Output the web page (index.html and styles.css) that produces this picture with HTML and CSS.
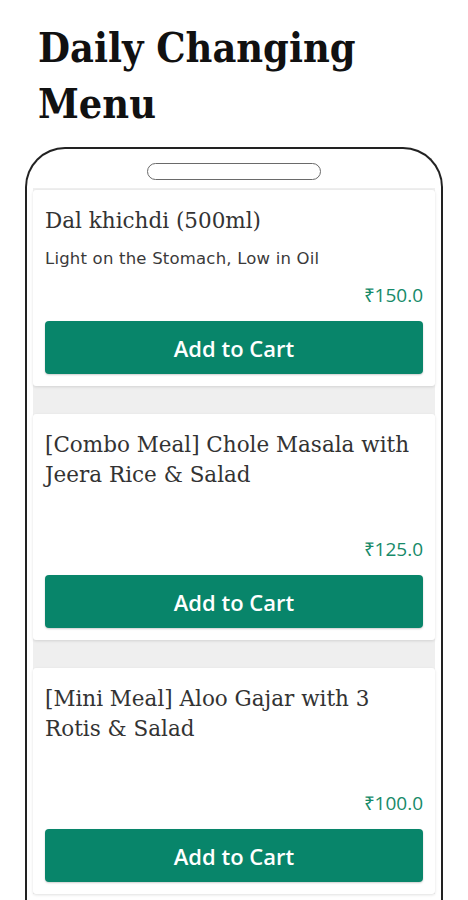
FILE: index.html
```html
<!DOCTYPE html>
<html lang="en">
<head>
<meta charset="utf-8">
<title>Daily Changing Menu</title>
<link rel="stylesheet" href="styles.css">
</head>
<body>
  <h1 class="heading">Daily Changing<br>Menu</h1>
  <div class="phone">
    <div class="notch"></div>
    <div class="list">
      <div class="card">
        <div class="title">Dal khichdi (500ml)</div>
        <div class="desc">Light on the Stomach, Low in Oil</div>
        <div class="price">₹150.0</div>
        <button class="cart">Add to Cart</button>
      </div>
      <div class="card">
        <div class="title">[Combo Meal] Chole Masala with Jeera Rice &amp; Salad</div>
        <div class="desc"></div>
        <div class="price">₹125.0</div>
        <button class="cart">Add to Cart</button>
      </div>
      <div class="card">
        <div class="title">[Mini Meal] Aloo Gajar with 3 Rotis &amp; Salad</div>
        <div class="desc"></div>
        <div class="price">₹100.0</div>
        <button class="cart">Add to Cart</button>
      </div>
    </div>
  </div>
</body>
</html>
```

FILE: styles.css
```css
* { box-sizing: border-box; }
html, body {
  margin: 0;
  padding: 0;
  background: #ffffff;
  overflow: hidden;
  height: 900px;
}
.heading {
  margin: 20px 0 15px 38px;
  font-family: "DejaVu Serif Condensed", "DejaVu Serif", serif;
  font-stretch: condensed;
  font-weight: bold;
  font-size: 41px;
  line-height: 56px;
  color: #111111;
}
.phone {
  margin-left: 25px;
  width: 418px;
  height: 900px;
  border: 2px solid #222222;
  border-bottom: none;
  border-radius: 40px 40px 0 0;
  padding: 0 6px;
  background: #ffffff;
}
.notch {
  width: 174px;
  height: 17px;
  margin: 14px auto 8px;
  border: 1.5px solid #6a6a6a;
  border-radius: 9px;
}
.list {
  background: #efefef;
  padding-top: 2px;
  display: flex;
  flex-direction: column;
  gap: 28px;
}
.card {
  background: #ffffff;
  border-radius: 3px;
  box-shadow: 0 1px 3px rgba(0, 0, 0, 0.12);
  padding: 16px 12px 12px;
  display: flex;
  flex-direction: column;
}
.title {
  font-family: "DejaVu Serif", serif;
  font-size: 21.5px;
  line-height: 30px;
  color: #333333;
}
.desc {
  margin-top: 12px;
  min-height: 22px;
  font-family: "DejaVu Sans", sans-serif;
  font-size: 16.5px;
  letter-spacing: 0.2px;
  line-height: 22px;
  color: #3a3a3a;
}
.price {
  margin-top: 13px;
  text-align: right;
  font-family: "Open Sans", sans-serif;
  font-size: 19px;
  line-height: 24px;
  color: #178a69;
}
.cart {
  margin-top: 14px;
  height: 53px;
  border: none;
  border-radius: 4px;
  background: #08856a;
  box-shadow: 0 1px 2px rgba(0, 0, 0, 0.2);
  color: #ffffff;
  font-family: "Open Sans", sans-serif;
  font-weight: 600;
  font-size: 22px;
}
```
